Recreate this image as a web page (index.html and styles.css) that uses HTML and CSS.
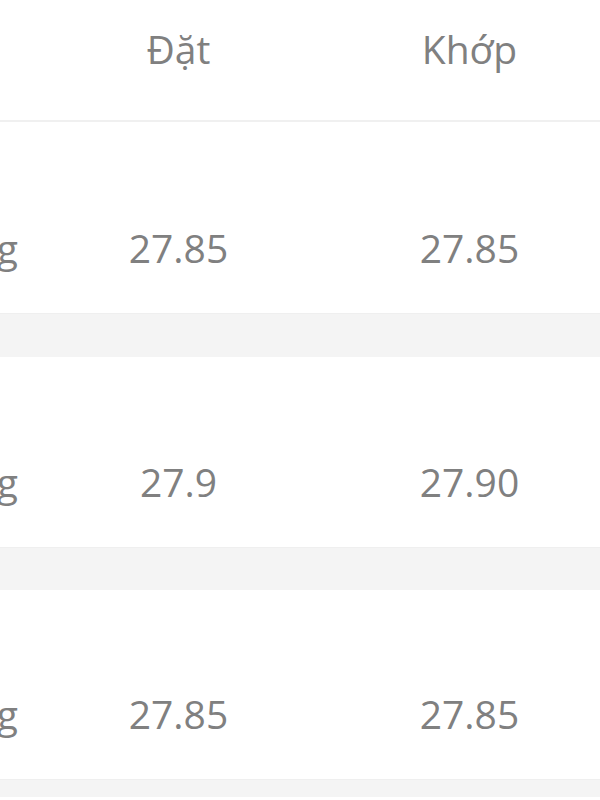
FILE: index.html
```html
<!DOCTYPE html>
<html lang="vi">
<head>
<meta charset="utf-8">
<link rel="stylesheet" href="styles.css">
</head>
<body>
<div class="table">
  <div class="head">
    <div class="cell cut"></div>
    <div class="cell">Đặt</div>
    <div class="cell">Khớp</div>
  </div>
  <div class="row r1">
    <div class="cell cut"><span>Thường</span></div>
    <div class="cell">27.85</div>
    <div class="cell">27.85</div>
  </div>
  <div class="gap g1"></div>
  <div class="row r2">
    <div class="cell cut"><span>Thường</span></div>
    <div class="cell">27.9</div>
    <div class="cell">27.90</div>
  </div>
  <div class="gap g2"></div>
  <div class="row r3">
    <div class="cell cut"><span>Thường</span></div>
    <div class="cell">27.85</div>
    <div class="cell">27.85</div>
  </div>
  <div class="gap g3"></div>
</div>
</body>
</html>
```
FILE: styles.css
```css
html, body {
  margin: 0;
  padding: 0;
  background: #ffffff;
}
.table {
  width: 600px;
  font-family: "Open Sans", "Noto Sans", sans-serif;
  font-size: 39px;
  line-height: 54px;
  color: #808080;
}
.head, .row {
  display: grid;
  grid-template-columns: 18px 321px 1fr;
  align-items: end;
  background: #ffffff;
}
.head {
  align-items: start;
  padding-top: 22px;
  box-sizing: border-box;
  border-bottom: 2px solid #f0f0f0;
  height: 122px;
}
.row {
  box-sizing: border-box;
  padding-bottom: 38px;
}
.r1 { height: 191px; }
.r2 { height: 190px; }
.r3 { height: 189px; }
.cell {
  text-align: center;
  white-space: nowrap;
}
.cut {
  display: flex;
  justify-content: flex-end;
  overflow: hidden;
}
.gap {
  background: #f4f4f4;
  border-top: 1px solid #efefef;
  box-sizing: border-box;
}
.g1 { height: 44px; }
.g2 { height: 43px; }
.g3 { height: 18px; }
```
